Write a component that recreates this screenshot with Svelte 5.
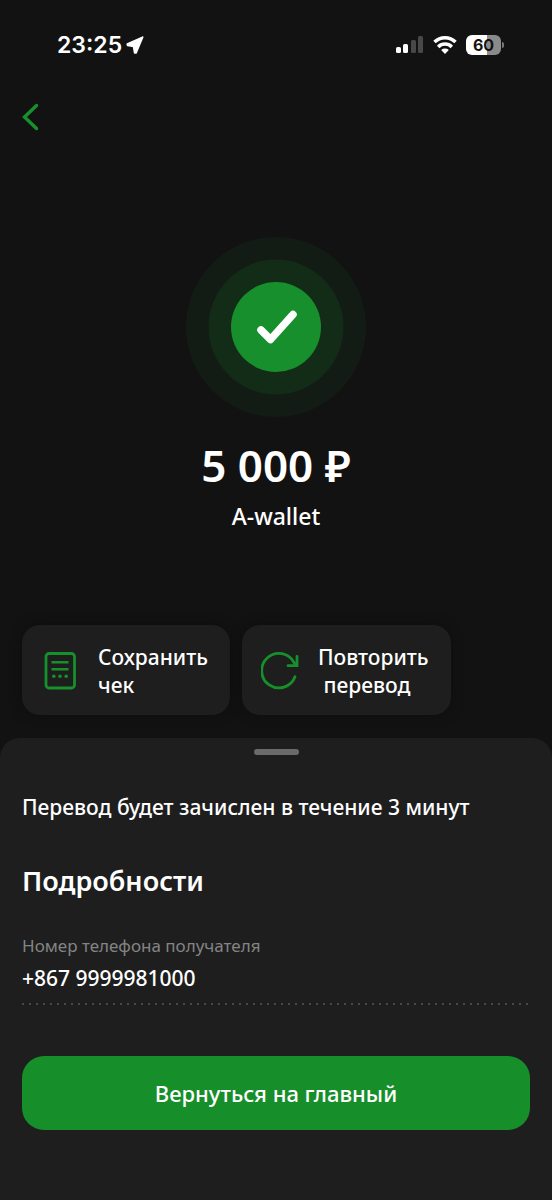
<script lang="ts">
  const amount = '5 000 ₽';
  const recipient = 'A-wallet';
  const details = [{ label: 'Номер телефона получателя', value: '+867 9999981000' }];
</script>

<div class="screen">
  <header class="status">
    <div class="time">
      <span>23:25</span>
      <svg width="18" height="18" viewBox="0 0 18 18" aria-hidden="true">
        <path d="M16.600 1.200 1.300 8 1.600 9.400 7.600 10.300 8.700 16.800 10 16.800Z" fill="#fff" stroke="#fff" stroke-width="1.800" stroke-linejoin="round" />
      </svg>
    </div>
    <div class="signals">
      <svg width="28" height="18" viewBox="0 0 28 18" aria-hidden="true">
        <rect x="0" y="11" width="5" height="6" rx="1.500" fill="#fff" />
        <rect x="7" y="8" width="5" height="9" rx="1.500" fill="#fff" />
        <rect x="15" y="4" width="5" height="13" rx="1.500" fill="#484848" />
        <rect x="22" y="0" width="5" height="17" rx="1.500" fill="#484848" />
      </svg>
      <svg width="24" height="18" viewBox="0 0 24 18" aria-hidden="true">
        <g fill="none" stroke="#fff" stroke-width="3.500">
          <path d="M1.500 6.100A15 15 0 0 1 22.500 6.100" />
          <path d="M5.200 10.900A9.700 9.700 0 0 1 18.800 10.900" />
        </g>
        <path d="M12 17.900 8.200 14.100A5.600 5.600 0 0 1 15.800 14.100Z" fill="#fff" />
      </svg>
      <div class="battery"><span class="charge">60</span><i></i></div>
    </div>
  </header>

  <nav>
    <button class="back" aria-label="Назад">
      <svg width="18" height="28" viewBox="0 0 18 28" aria-hidden="true">
        <path d="M14.500 2.500 2.500 14l12 11.500" fill="none" stroke="#16902b" stroke-width="3.400" stroke-linecap="round" stroke-linejoin="miter" />
      </svg>
    </button>
  </nav>

  <main class="result">
    <svg class="badge" width="180" height="180" viewBox="0 0 180 180" aria-hidden="true">
      <circle cx="90" cy="90" r="90" fill="#131c14" />
      <circle cx="90" cy="90" r="67.500" fill="#132c17" />
      <circle cx="90" cy="90" r="45" fill="#178f2c" />
      <path d="M75 93 84.500 102.500 107 77.500" fill="none" stroke="#fff" stroke-width="7.500" stroke-linecap="round" stroke-linejoin="round" />
    </svg>
    <h1>{amount}</h1>
    <p>{recipient}</p>
  </main>

  <div class="actions">
    <button class="action">
      <svg width="38" height="38" viewBox="0 0 38 38" aria-hidden="true">
        <rect x="5" y="1.500" width="28.500" height="34.500" rx="3" fill="none" stroke="#16902b" stroke-width="2.800" />
        <path d="M10.500 10.300h17M10.500 17.300h17" stroke="#16902b" stroke-width="2.600" />
        <g fill="#16902b"><circle cx="12.800" cy="24.300" r="1.800" /><circle cx="19" cy="24.300" r="1.800" /><circle cx="25.200" cy="24.300" r="1.800" /></g>
      </svg>
      <span>Сохранить<br />чек</span>
    </button>
    <button class="action">
      <svg width="38" height="38" viewBox="0 0 38 38" aria-hidden="true">
        <g fill="none" stroke="#16902b" stroke-width="2.800" stroke-linecap="round">
          <path d="M34 24.700A17.200 17.200 0 1 1 33.100 10.600L35.500 13" />
          <path d="M36 4.500v9.200H27" />
        </g>
      </svg>
      <span>Повторить<br />&nbsp;перевод</span>
    </button>
  </div>

  <section class="sheet">
    <div class="handle"></div>
    <p class="note">Перевод будет зачислен в течение 3 минут</p>
    <h2>Подробности</h2>
    <dl>
      {#each details as item}
        <div class="detail">
          <dt>{item.label}</dt>
          <dd>{item.value}</dd>
        </div>
      {/each}
    </dl>
    <button class="primary">Вернуться на главный</button>
  </section>
</div>

<style>
  :global(body) {
    margin: 0;
    background: #121212;
  }
  .screen {
    min-height: 100vh;
    display: flex;
    flex-direction: column;
    background: #121212;
    color: #fff;
    font-family: 'Noto Sans', sans-serif;
    font-size: 21px;
    font-weight: 500;
    line-height: 28px;
  }
  button {
    border: 0;
    padding: 0;
    color: inherit;
    font: inherit;
    cursor: pointer;
  }
  svg {
    display: block;
    flex: none;
  }
  h1, h2, p, dl, dd {
    margin: 0;
  }
  .status {
    display: flex;
    justify-content: space-between;
    align-items: center;
    height: 90px;
    padding: 0 48px 0 57px;
    font-family: Inter, sans-serif;
  }
  .time {
    display: flex;
    align-items: center;
    gap: 4px;
    font-size: 23px;
    font-weight: 600;
  }
  .signals {
    display: flex;
    align-items: center;
    gap: 9px;
  }
  .battery {
    display: flex;
    align-items: center;
    gap: 1px;
  }
  .charge {
    width: 35px;
    height: 20px;
    border-radius: 6px;
    background: linear-gradient(90deg, #fff 60%, #8a8a8a 60%);
    color: #121212;
    font-size: 16px;
    font-weight: 700;
    line-height: 20px;
    text-align: center;
  }
  .battery i {
    width: 2px;
    height: 6px;
    border-radius: 0 2px 2px 0;
    background: #777;
  }
  nav {
    padding: 13px 22px 0;
  }
  .back {
    display: block;
    background: none;
  }
  .result {
    display: flex;
    flex-direction: column;
    align-items: center;
    padding: 106px 22px 95px;
  }
  h1 {
    margin-top: 20px;
    font-size: 44px;
    font-weight: 600;
    line-height: 56px;
  }
  .result p {
    margin-top: 9px;
    font-size: 23px;
  }
  .actions {
    display: flex;
    gap: 12px;
    padding: 0 22px 23px;
  }
  .action {
    display: flex;
    align-items: center;
    gap: 19px;
    height: 90px;
    padding: 2px 22px 0 19px;
    border-radius: 18px;
    background: #1e1e1e;
    box-shadow: 0 0 12px #0e0e0e;
    text-align: left;
  }
  .sheet {
    flex: 1;
    padding: 11px 22px 70px;
    border-radius: 20px 20px 0 0;
    background: #1e1e1e;
  }
  .handle {
    width: 45px;
    height: 6px;
    margin: 0 auto;
    border-radius: 3px;
    background: #6b6b6b;
  }
  .note {
    margin-top: 38px;
  }
  h2 {
    margin-top: 42px;
    font-size: 27px;
    font-weight: 600;
    line-height: 36px;
  }
  dl {
    margin-top: 35px;
  }
  .detail {
    padding-bottom: 13px;
    background: linear-gradient(90deg, #484848 2px, transparent 2px) 0 100% / 7px 2px repeat-x;
  }
  dt {
    color: #848484;
    font-size: 17px;
    font-weight: 400;
    line-height: 24px;
  }
  dd {
    margin-top: 6px;
  }
  .primary {
    display: block;
    width: 100%;
    height: 74px;
    margin-top: 51px;
    border-radius: 22px;
    background: #168e2a;
    font-size: 22px;
  }
</style>
